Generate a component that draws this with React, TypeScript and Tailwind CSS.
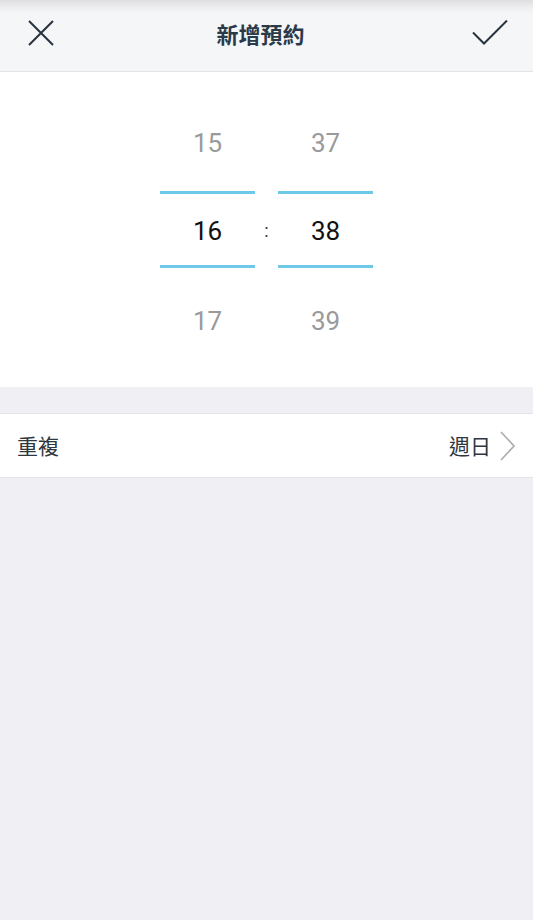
import React from "react";

const cjk = { fontFamily: '"Noto Sans CJK TC", "Noto Sans", sans-serif' };
const roboto = { fontFamily: 'Roboto, "Noto Sans", sans-serif' };

function Column({ top, mid, bottom }: { top: string; mid: string; bottom: string }) {
  return (
    <div className="flex w-[95px] flex-col pt-[26px]" style={roboto}>
      <div className="flex h-[88px] items-center justify-center pt-[2px] text-[26px] text-[#9a9a9a]">{top}</div>
      <div className="mt-[5px] h-[3px] bg-[#6ec8e8]" />
      <div className="flex h-[71px] items-center justify-center pt-[4px] text-[26px] text-[#111]">{mid}</div>
      <div className="h-[3px] bg-[#6ec8e8]" />
      <div className="mt-[8px] flex h-[88px] items-center justify-center pt-[2px] text-[26px] text-[#9a9a9a]">{bottom}</div>
    </div>
  );
}

export default function App() {
  return (
    <div className="flex min-h-[920px] w-full flex-col bg-[#efeff4]" style={cjk}>
      <header className="flex h-[72px] items-center justify-between border-b border-[#e4e4e8] bg-[linear-gradient(to_bottom,#dedee0_0px,#f0f1f3_9px,#f5f6f8_14px)] pb-[4px] pl-[27px] pr-[23px]">
        <svg width="28" height="28" viewBox="0 0 28 28">
          <path d="M2 1 L26 25 M26 1 L2 25" stroke="#26323e" strokeWidth="2" fill="none" />
        </svg>
        <h1 className="ml-[-6px] text-[22px] font-bold text-[#2b3a48]">新增預約</h1>
        <svg width="38" height="28" viewBox="0 0 38 28">
          <path d="M1 12.5 L12 23.5 L35 0.5" stroke="#26323e" strokeWidth="2" fill="none" />
        </svg>
      </header>

      <section className="flex h-[315px] justify-center bg-white">
        <Column top="15" mid="16" bottom="17" />
        <div className="flex w-[23px] flex-col pt-[149px] text-center text-[18px] text-[#333]" style={roboto}>
          <span className="leading-[20px]">:</span>
        </div>
        <Column top="37" mid="38" bottom="39" />
      </section>

      <div className="h-[26px]" />

      <div className="flex h-[65px] items-center justify-between border-y border-[#e4e4e8] bg-white pl-[17px] pr-[17px]">
        <span className="text-[21px] text-[#2f3740]">重複</span>
        <div className="flex items-center gap-[9px]">
          <span className="text-[21px] text-[#2f3740]">週日</span>
          <svg width="16" height="30" viewBox="0 0 16 30">
            <path d="M1 1 L14 15 L1 29" stroke="#ababab" strokeWidth="1.6" fill="none" />
          </svg>
        </div>
      </div>

      <div className="flex-1" />
    </div>
  );
}
